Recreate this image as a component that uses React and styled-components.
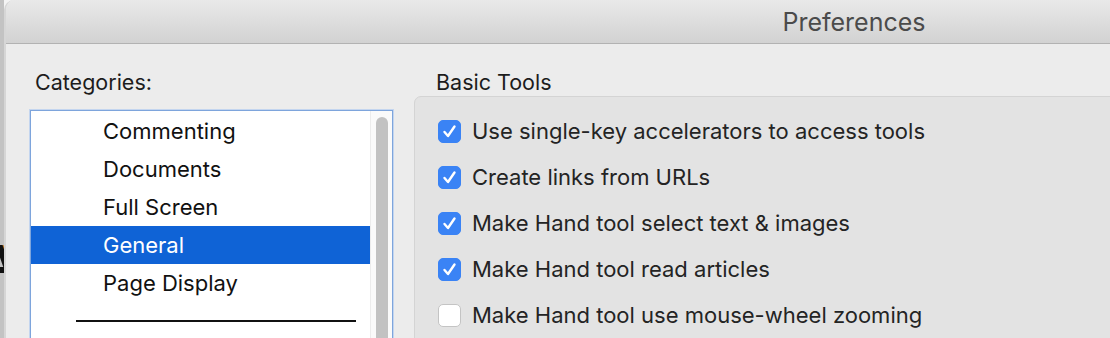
import React from "react";
import styled, { createGlobalStyle } from "styled-components";

const GlobalStyle = createGlobalStyle`
  html, body {
    margin: 0;
    padding: 0;
    background: #c6c6c6;
    font-family: Inter, "Liberation Sans", Arial, sans-serif;
    -webkit-font-smoothing: antialiased;
  }
`;

const categories = ["Commenting", "Documents", "Full Screen", "General", "Page Display"];

const options = [
  { label: "Use single-key accelerators to access tools", checked: true },
  { label: "Create links from URLs", checked: true },
  { label: "Make Hand tool select text & images", checked: true },
  { label: "Make Hand tool read articles", checked: true },
  { label: "Make Hand tool use mouse-wheel zooming", checked: false },
];

const CheckMark = () => (
  <svg width="23" height="23" viewBox="0 0 23 23">
    <path
      d="M6.5 12 L10 16 L16.5 6.5"
      fill="none"
      stroke="#fff"
      strokeWidth="2.4"
      strokeLinecap="round"
      strokeLinejoin="round"
    />
  </svg>
);

const App = () => {
  return (
    <>
      <GlobalStyle />
      <Page>
        <DesktopEdge>
          <Glyph aria-hidden="true">A</Glyph>
        </DesktopEdge>
        <Window>
          <TitleBar>
            <Title>Preferences</Title>
          </TitleBar>
          <Body>
            <LeftColumn>
              <Label>Categories:</Label>
              <ListBox>
                <Items>
                  {categories.map(c => (
                    <Item key={c} selected={c === "General"}>
                      {c}
                    </Item>
                  ))}
                  <Separator />
                </Items>
                <Scrollbar>
                  <Thumb />
                </Scrollbar>
              </ListBox>
            </LeftColumn>
            <RightColumn>
              <SectionTitle>Basic Tools</SectionTitle>
              <Panel>
                {options.map(o => (
                  <OptionRow key={o.label}>
                    <Checkbox checked={o.checked}>{o.checked && <CheckMark />}</Checkbox>
                    <OptionText>{o.label}</OptionText>
                  </OptionRow>
                ))}
              </Panel>
            </RightColumn>
          </Body>
        </Window>
      </Page>
    </>
  );
};

export default App;

const Page = styled.div`
  display: flex;
  width: 1110px;
  height: 338px;
  overflow: hidden;
  background: #f4f4f4;
`;

const DesktopEdge = styled.div`
  flex: 0 0 4px;
  background: #c3c3c3;
  overflow: hidden;
  position: relative;
`;

const Glyph = styled.div`
  position: absolute;
  top: 236px;
  right: -14px;
  font-family: "Liberation Sans", Arial, sans-serif;
  font-weight: 700;
  font-size: 56px;
  line-height: 56px;
  color: #111;
  text-shadow: 1px 0 0 #c07a2a;
`;

const Window = styled.div`
  flex: 0 0 1696px;
  display: flex;
  flex-direction: column;
  background: #ececec;
  border-left: 2px solid #d6d6d6;
  border-top-left-radius: 10px;
  overflow: hidden;
`;

const TitleBar = styled.div`
  flex: 0 0 43px;
  display: flex;
  align-items: center;
  justify-content: center;
  background: linear-gradient(#e9e9e9, #d2d2d2);
  border-bottom: 1px solid #b2b2b2;
`;

const Title = styled.div`
  font-size: 25px;
  color: #4b4b4b;
  margin-top: 1px;
`;

const Body = styled.div`
  display: flex;
  gap: 21px;
  padding-left: 24px;
  flex-shrink: 0;
`;

const LeftColumn = styled.div`
  display: flex;
  flex-direction: column;
  width: 363px;
  padding-top: 26px;
`;

const Label = styled.div`
  font-size: 21.5px;
  line-height: 24px;
  color: #1c1c1c;
  padding-left: 5px;
  margin-bottom: 16px;
`;

const ListBox = styled.div`
  display: flex;
  height: 260px;
  background: #fff;
  border: 1px solid #7ea5dc;
  box-shadow: 0 0 0 1px #c3d5ef;
`;

const Items = styled.div`
  flex: 1;
  display: flex;
  flex-direction: column;
  padding-top: 1px;
`;

const Item = styled.div`
  height: 38px;
  line-height: 38px;
  padding-left: 72px;
  font-size: 22px;
  color: ${props => (props.selected ? "#fff" : "#111")};
  background: ${props => (props.selected ? "#0f63d6" : "transparent")};
`;

const Separator = styled.div`
  margin: 18px 14px 0 45px;
  height: 2px;
  background: #111;
`;

const Scrollbar = styled.div`
  flex: 0 0 22px;
  background: #fafafa;
  border-left: 1px solid #ececec;
  padding: 6px 4px 0 5px;
  box-sizing: border-box;
`;

const Thumb = styled.div`
  height: 260px;
  background: #c2c2c2;
  border-radius: 6px;
`;

const RightColumn = styled.div`
  flex: 1;
  display: flex;
  flex-direction: column;
  padding-top: 26px;
`;

const SectionTitle = styled.div`
  font-size: 21.5px;
  line-height: 24px;
  color: #1c1c1c;
  padding-left: 22px;
  margin-bottom: 2px;
`;

const Panel = styled.div`
  background: #e3e3e3;
  border: 1px solid #d4d4d4;
  border-radius: 7px;
  padding: 11px 0 0 23px;
  height: 300px;
`;

const OptionRow = styled.div`
  display: flex;
  align-items: center;
  gap: 11px;
  height: 46px;
`;

const Checkbox = styled.div`
  width: 23px;
  height: 23px;
  box-sizing: border-box;
  border-radius: 5px;
  background: ${props => (props.checked ? "#3a83f5" : "#fff")};
  border: 1px solid ${props => (props.checked ? "#3a83f5" : "#c4c4c4")};
  display: flex;
  align-items: center;
  justify-content: center;
  svg {
    margin: -1px;
  }
`;

const OptionText = styled.div`
  font-size: 22px;
  color: #242424;
`;
